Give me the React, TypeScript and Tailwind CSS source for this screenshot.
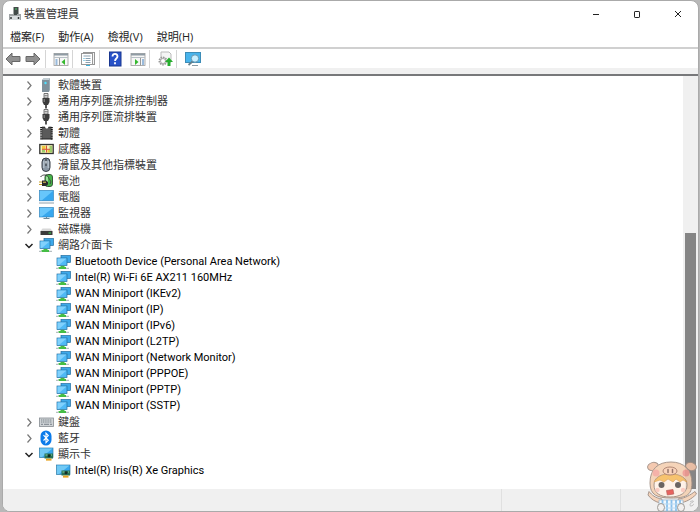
import type { ReactNode } from "react";

type IconName =
  | "software" | "usb" | "chip" | "sensor" | "mouse" | "battery" | "computer"
  | "monitor" | "disk" | "network" | "keyboard" | "bluetooth" | "display";

const art: Record<IconName, ReactNode> = {
  software: (
    <>
      <path d="M3 3 5 1h6v12l-1 2H3z" fill="#9aa9b2" />
      <path d="M3 3h7v12H3z" fill="#7f909b" />
      <path d="M3 3 5 1h6l-1 2z" fill="#c3ced4" />
      <circle cx="6.5" cy="6" r="1.2" fill="#4fe0ff" />
    </>
  ),
  usb: (
    <>
      <path d="M5 .5h4V5H5z" fill="#e4e4e4" stroke="#555" strokeWidth=".8" />
      <path d="M6.200 2v1.300M7.900 2v1.300" stroke="#444" strokeWidth=".8" />
      <path d="M3.500 5h7v4L9 12H5L3.500 9z" fill="#3c3c3c" />
      <path d="M5.200 6v3" stroke="#999" />
      <path d="M7 12v3.500" stroke="#444" strokeWidth="1.800" />
    </>
  ),
  chip: (
    <>
      <path d="M3 2h3l1 1.500h1.500L9.500 2h3v12H3z" fill="#5a5a5a" />
      <path d="M2.200 2v13M12.800 2v13" stroke="#111" strokeWidth="2" strokeDasharray="1.300 .8" />
      <path d="M3 14h10" stroke="#222" />
      <path d="M3 2.200h3M9.500 2.200h3" stroke="#222" />
    </>
  ),
  sensor: (
    <>
      <rect x=".8" y="3.500" width="13.400" height="9" fill="#f6f0b8" stroke="#333" strokeWidth="1.300" />
      <path d="M3 5h3.500v3H3zM8.500 9H11v2.500H8.500z" fill="#f0c93c" />
      <path d="M10.500 5H13v6.500h-2.500zM3 9h3v2.500H3z" fill="#9bcb6b" />
      <path d="M3 8.300h8M7.500 4.500v7" stroke="#d9533a" />
    </>
  ),
  mouse: (
    <>
      <rect x="3" y="1" width="8" height="13.500" rx="4" fill="#8a97a4" stroke="#3a4048" />
      <path d="M4.800 4v7M9.200 4v7" stroke="#c5d0da" />
      <path d="M7 2v7" stroke="#252a30" />
      <path d="M7 4v2.500" stroke="#dfe6ec" strokeWidth="1.300" />
    </>
  ),
  battery: (
    <>
      <rect x="6" y="1.500" width="7.500" height="12" rx="2.500" fill="#45b649" stroke="#3b5a3d" />
      <path d="M8 3.500v8" stroke="#b9efb4" strokeWidth="1.500" />
      <path d="M1.500 4c2-3 7-2.500 8 .5S13 7.500 11 11" fill="none" stroke="#444" />
      <path d="M3 7.500h4L9 9v2.500L7 13H3z" fill="#2b2b2b" />
      <path d="M0 9h3M0 11.500h3" stroke="#c9a227" strokeWidth="1.200" />
      <path d="M4 9.200h3" stroke="#e8d25a" />
    </>
  ),
  computer: (
    <>
      <rect x=".5" y="1.500" width="14" height="10.300" fill="#37a7ee" stroke="#2b7fb8" strokeWidth=".6" />
      <path d="M1 2h13L3 11.300H1z" fill="#67c6fb" />
      <path d="M0 14h15" stroke="#8da0ac" strokeWidth="1.200" />
    </>
  ),
  monitor: (
    <>
      <rect x=".5" y="2.500" width="14" height="9.500" fill="#37a7ee" stroke="#2b7fb8" strokeWidth=".6" />
      <path d="M1 3h13L3 11.500H1z" fill="#67c6fb" />
      <path d="M7.500 12v2M4.500 13.500h6" stroke="#6f8896" />
    </>
  ),
  disk: (
    <>
      <path d="M3.500 7.500h8l2 2.500h-12z" fill="#d8d8d8" />
      <rect x="1.500" y="10" width="12" height="4" fill="#3b3b3b" />
      <path d="M9.500 12h2.500" stroke="#39d353" />
    </>
  ),
  network: (
    <>
      <rect x="5" y="1.500" width="9.500" height="7" fill="#3ea9ea" stroke="#216d9f" strokeWidth=".7" />
      <rect x="1" y="4" width="10" height="7.500" fill="#4fb9f6" stroke="#216d9f" strokeWidth=".7" />
      <path d="M1.500 4.500h9L3 11H1.500z" fill="#80d1fd" />
      <path d="M4.500 11.900h4v1.600h-4z" fill="#45bd45" />
      <path d="M2.500 14h7.500" stroke="#45bd45" strokeWidth="2" />
      <path d="M0 14.300h2.500M10 14.300h3" stroke="#b7bfc2" strokeWidth="1.300" />
    </>
  ),
  keyboard: (
    <>
      <rect x=".5" y="4" width="14" height="8.500" fill="#cfd3d6" stroke="#858c92" strokeWidth=".8" />
      <path d="M2 6h11M2 8h11" stroke="#7a838a" strokeDasharray="1.200 .6" />
      <path d="M2 10.300h2M5 10.300h5M11 10.300h2" stroke="#7a838a" />
    </>
  ),
  bluetooth: (
    <>
      <rect x="1.500" y=".5" width="11" height="15" rx="5.500" fill="#0b7bea" />
      <path d="M4.500 5.200 9.300 10.300 7 12.600V3.200L9.300 5.600 4.500 10.500" fill="none" stroke="#fff" strokeWidth="1.100" />
    </>
  ),
  display: (
    <>
      <rect x=".5" y="2" width="13.500" height="9.500" fill="#37a7ee" stroke="#347fa9" strokeWidth=".7" />
      <path d="M1 2.500h12.500L3 11H1z" fill="#70c9f5" />
      <rect x="5.500" y="7.500" width="8.500" height="5" fill="#287257" />
      <circle cx="10" cy="9.700" r="1.500" fill="#142d25" />
      <path d="M6.500 9h2M12 9h1" stroke="#8bd2a1" />
      <path d="M7 13.600h5.500" stroke="#e8a420" strokeWidth="2" />
    </>
  ),
};

function Icon({ name }: { name: IconName }) {
  return <svg aria-hidden="true" viewBox="0 0 15 16" className="h-4 w-[15px] shrink-0">{art[name]}</svg>;
}

type Device = { label: string; icon: IconName; children?: string[] };

const devices: Device[] = [
  { label: "軟體裝置", icon: "software" },
  { label: "通用序列匯流排控制器", icon: "usb" },
  { label: "通用序列匯流排裝置", icon: "usb" },
  { label: "韌體", icon: "chip" },
  { label: "感應器", icon: "sensor" },
  { label: "滑鼠及其他指標裝置", icon: "mouse" },
  { label: "電池", icon: "battery" },
  { label: "電腦", icon: "computer" },
  { label: "監視器", icon: "monitor" },
  { label: "磁碟機", icon: "disk" },
  {
    label: "網路介面卡",
    icon: "network",
    children: [
      "Bluetooth Device (Personal Area Network)",
      "Intel(R) Wi-Fi 6E AX211 160MHz",
      "WAN Miniport (IKEv2)",
      "WAN Miniport (IP)",
      "WAN Miniport (IPv6)",
      "WAN Miniport (L2TP)",
      "WAN Miniport (Network Monitor)",
      "WAN Miniport (PPPOE)",
      "WAN Miniport (PPTP)",
      "WAN Miniport (SSTP)",
    ],
  },
  { label: "鍵盤", icon: "keyboard" },
  { label: "藍牙", icon: "bluetooth" },
  { label: "顯示卡", icon: "display", children: ["Intel(R) Iris(R) Xe Graphics"] },
];

function TreeItem({ device }: { device: Device }) {
  const open = Boolean(device.children);
  return (
    <li>
      <div className="flex h-4 items-center">
        <button aria-label={device.label} aria-expanded={open} className="mr-1 flex h-4 w-3 items-center justify-center">
          <svg viewBox="0 0 10 10" className="size-[10px]" fill="none">
            {open ? (
              <path d="M1.500 4 5 7.500 8.500 4" stroke="#222" strokeWidth="1.500" />
            ) : (
              <path d="M3.500 1.500 7 5.500 3.500 9.500" stroke="#777" strokeWidth="1.200" />
            )}
          </svg>
        </button>
        <Icon name={device.icon} />
        <span className="ml-1 whitespace-nowrap">{device.label}</span>
      </div>
      {device.children && (
        <ul className="pt-px pl-[33px]">
          {device.children.map((child) => (
            <li key={child} className="flex h-4 items-center text-black">
              <Icon name={device.icon} />
              <span className="ml-1 font-['Roboto','Noto_Sans_CJK_TC',sans-serif] whitespace-nowrap">{child}</span>
            </li>
          ))}
        </ul>
      )}
    </li>
  );
}

function Tool({ label, children }: { label: string; children: ReactNode }) {
  return (
    <button aria-label={label} className="flex h-4 w-4 items-center justify-center">
      <svg viewBox="0 0 16 16" className="size-4">{children}</svg>
    </button>
  );
}

function ToolGroup({ children }: { children: ReactNode }) {
  return <div className="flex h-[18px] items-center gap-[7px] border-r border-[#d5d5d5] pr-[3px] pl-[7px]">{children}</div>;
}

function Panel({ flip }: { flip?: boolean }) {
  return (
    <>
      <rect x="1" y="2.500" width="14" height="12" fill="#f7f7f7" stroke="#9a9a9a" strokeWidth=".8" />
      <path d="M1 3.500h14" stroke="#8f9ba4" strokeWidth="2" />
      <path d="M1 6.500h14" stroke="#b8c0c6" />
      {flip ? (
        <>
          <path d="M10.500 7v7.500" stroke="#999" />
          <path d="M12 9h2M12 11h2M12 13h2" stroke="#3c7fc0" />
          <path d="m5 8 3.500 3L5 14z" fill="#35b82e" />
        </>
      ) : (
        <>
          <path d="M6.500 7v7.500" stroke="#999" />
          <path d="M2.500 9h2M2.500 11h2M2.500 13h2" stroke="#3c7fc0" />
          <path d="m12 8-3.500 3 3.500 3z" fill="#35b82e" />
        </>
      )}
    </>
  );
}

function Mascot() {
  return (
    <svg aria-hidden="true" viewBox="0 0 54 52" className="absolute right-0 bottom-0 h-[52px] w-[54px] opacity-90">
      <g stroke="#a08d82" strokeWidth="1">
        <path d="M16 39C9 38 6 35 3 31.500L2 35c3 4 7 7 13 8zM32 39c8-1 12-4 17-7.500l1.500 2.500c-5 5-10 8-17 9z" fill="#f6d2b6" />
        <ellipse cx="7" cy="6.500" rx="5.500" ry="4" fill="#f3c4a8" transform="rotate(-15 7 6.500)" />
        <ellipse cx="45" cy="6.500" rx="5.500" ry="4" fill="#f3c4a8" transform="rotate(15 45 6.500)" />
        <path d="M4 23C4 9 12 2 25 2s21 8 21 21-7 15-21 15S4 35 4 23z" fill="#f4d0b2" />
        <path d="M8 25c0-8 7-11 16-11s17 3 17 11-7 12-17 12S8 33 8 25z" fill="#fff1e6" />
      </g>
      <path d="M8 22c3-5 8-8 16-8s14 3 17 8l-4-2-3 2-4-3-3 3-5-3-4 3-4-2z" fill="#f7bd60" stroke="#d99b4c" strokeWidth=".6" />
      <circle cx="10" cy="13" r="3.500" fill="#f4aaa0" />
      <circle cx="40" cy="13" r="3.500" fill="#f09a92" />
      <ellipse cx="24" cy="11" rx="7" ry="4" fill="#fad0b4" stroke="#a87865" />
      <path d="M22 9.500v3M26.500 9.500v3" stroke="#8a655a" strokeWidth="1.500" strokeLinecap="round" />
      <circle cx="15.500" cy="25" r="3" fill="#5c5552" />
      <circle cx="32" cy="25" r="3" fill="#5c5552" />
      <circle cx="11.500" cy="30" r="2.200" fill="#fbc8bc" />
      <circle cx="37" cy="30" r="2.200" fill="#fbc8bc" />
      <path d="m20.500 30.500 6.500-1 .8 4.500-6.500 1z" fill="#e8534f" stroke="#b0504a" strokeWidth=".7" />
      <path d="M13 40h24v11H13z" fill="#f2f9ff" stroke="#9db4c6" strokeWidth=".8" />
      <path d="M16.500 40v11M21 40v11M25.500 40v11M30 40v11M34 40v11" stroke="#7fbcec" strokeWidth="1.800" />
      <path d="M13 44h24M13 48h24" stroke="#b4d8f2" />
      <ellipse cx="15" cy="47.500" rx="3.500" ry="4" fill="#f3f1ef" stroke="#95908c" />
      <ellipse cx="35" cy="47.500" rx="3.500" ry="4" fill="#f3f1ef" stroke="#95908c" />
      <path d="M44 42c3-2 4-1 3 0-3 1-4 4-2 4s3-2 2-2" fill="none" stroke="#aaa" strokeWidth=".8" />
    </svg>
  );
}

export default function App() {
  return (
    <div className="relative flex h-screen flex-col bg-[#b8b8b8] pr-px pl-0.5 font-['Open_Sans','Noto_Sans_CJK_TC',sans-serif] text-[11px] text-[#333]">
      <main className="flex min-h-0 flex-1 flex-col overflow-hidden rounded-lg border border-[#aaa] bg-white">
        <header className="flex h-[26px] shrink-0 items-center pl-1.5">
          <svg aria-hidden="true" viewBox="0 0 12 14" className="mr-[3px] h-3.5 w-3">
            <path d="M4.500 0h5v8h-5z" fill="#424a48" />
            <path d="M6 2h2" stroke="#4bd06a" />
            <path d="M0 7h4v1h4V7h4v6H0z" fill="#a0a4a6" />
            <path d="M1 9h10v4H1z" fill="#d8dcde" />
            <path d="M2 10v2M9.500 10v2" stroke="#343838" strokeWidth="1.500" />
          </svg>
          <h1 className="flex-1">裝置管理員</h1>
          <button aria-label="Minimize" className="flex h-6 w-[41px] items-center justify-center">
            <svg viewBox="0 0 8 8" className="size-2"><path d="M1 4.500h6" stroke="#222" /></svg>
          </button>
          <button aria-label="Maximize" className="flex h-6 w-[41px] items-center justify-center">
            <svg viewBox="0 0 8 8" className="size-2"><rect x="1.500" y="1.500" width="5" height="6" rx=".6" fill="none" stroke="#222" /></svg>
          </button>
          <button aria-label="Close" className="flex h-6 w-[41px] items-center justify-center">
            <svg viewBox="0 0 8 8" className="size-2"><path d="m1 1 6 6m0-6L1 7" stroke="#222" /></svg>
          </button>
        </header>
        <nav className="flex h-5 shrink-0 items-center gap-3.5 pl-[7px] text-[#222]">
          <button>檔案(F)</button>
          <button>動作(A)</button>
          <button>檢視(V)</button>
          <button>說明(H)</button>
        </nav>
        <div className="flex h-[21px] shrink-0 items-center border-t-2 border-[#d0d0d0]">
          <div className="flex h-[18px] items-center gap-1 border-r border-[#d5d5d5] pr-1 pl-0.5">
            <Tool label="Back"><path d="m1 8 6-6v3.500h8v5H7V14z" fill="#919191" stroke="#686868" /></Tool>
            <Tool label="Forward"><path d="M15 8 9 2v3.500H1v5h8V14z" fill="#919191" stroke="#686868" /></Tool>
          </div>
          <ToolGroup>
            <Tool label="Show console tree"><Panel /></Tool>
          </ToolGroup>
          <ToolGroup>
            <Tool label="Properties">
              <rect x="3.500" y="1.500" width="11" height="12" fill="#f6f6f6" stroke="#959595" />
              <rect x="1.500" y="2.500" width="11" height="11" fill="#fff" stroke="#999" />
              <path d="M3.500 5h7M5.500 7.500h5M5.500 9.500h5M5.500 11.500h5" stroke="#8aa0b0" />
              <path d="M3.500 7.500h1M3.500 9.500h1M6 14.500h4" stroke="#3fb3dc" />
            </Tool>
          </ToolGroup>
          <ToolGroup>
            <Tool label="Help">
              <rect x="2.500" y="1" width="11.500" height="14" fill="#2852c8" stroke="#18368f" />
              <path d="M5.500 5.500C5.500 2 10.500 2 10.500 5.500 10.500 7.500 8 7.500 8 10" fill="none" stroke="#fff" strokeWidth="1.800" />
              <path d="M8 11.300v1.900" stroke="#fff" strokeWidth="1.800" />
            </Tool>
            <Tool label="Show action pane"><Panel flip /></Tool>
          </ToolGroup>
          <ToolGroup>
            <Tool label="Scan for hardware changes">
              <path d="M4 1h8l2 2v8H4z" fill="#f5f5f5" stroke="#bbb" />
              <circle cx="6" cy="10" r="3.500" fill="none" stroke="#999" strokeWidth="2" strokeDasharray="1.500 .8" />
              <circle cx="6" cy="10" r="2.500" fill="#fff" stroke="#aaa" />
              <path d="m12 6.500-4 4.500h2.500v4h3v-4H16z" fill="#27ae2e" />
            </Tool>
          </ToolGroup>
          <div className="pl-2">
            <Tool label="Add drivers">
              <rect x=".5" y="1.500" width="15" height="10" fill="#48b4ec" stroke="#3c8cb7" />
              <path d="M7 14.500h6" stroke="#8a9aa3" />
              <circle cx="10" cy="7.500" r="3.700" fill="#c9efff" stroke="#6497b2" />
              <path d="m7.500 10.500-4 3.500" stroke="#667f8b" strokeWidth="1.700" />
            </Tool>
          </div>
        </div>
        <div className="h-[6px] shrink-0 bg-[#f0f0f0]" />
        <section className="flex min-h-0 flex-1 border-t-2 border-[#77787a]">
          <ul className="min-w-0 flex-1 overflow-hidden pt-px pl-5">
            {devices.map((device) => <TreeItem key={device.label} device={device} />)}
          </ul>
          <div className="flex w-[15px] flex-col justify-end bg-[#f0f0f0] px-0.5">
            <div className="h-[62%] bg-[#858585]" />
          </div>
        </section>
        <footer className="flex h-[22px] shrink-0 justify-end bg-[#f0f0f0]">
          <span className="w-[119px] border-l border-[#e0e0e0]" />
          <span className="w-[78px] border-l border-[#e0e0e0]" />
        </footer>
      </main>
      <Mascot />
    </div>
  );
}
